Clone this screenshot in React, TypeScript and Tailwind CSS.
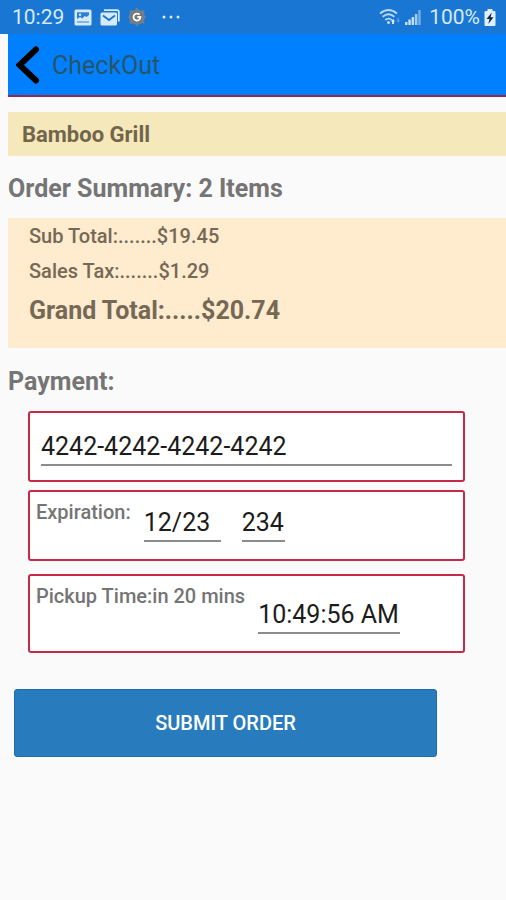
import { useState } from "react";

function PictureIcon() {
  return (
    <svg width="18" height="17" viewBox="0 0 18 17" aria-hidden="true">
      <rect x="0.5" y="0.5" width="17" height="16" rx="1.5" fill="#d5eafc" />
      <rect x="3" y="3.3" width="12" height="10.2" fill="#2a80d4" />
      <path d="M3 12.5V10l3-2 2.500 1.500L10.500 7l2 1L15 6v6.500Z" fill="#d5eafc" />
      <circle cx="6" cy="5.8" r="1.2" fill="#d5eafc" />
    </svg>
  );
}

function MailIcon() {
  return (
    <svg width="20" height="17" viewBox="0 0 20 17" fill="none" aria-hidden="true">
      <path d="M4 1.2H17q1.8 0 1.8 1.8v9.500" stroke="#d5eafc" strokeWidth="1.8" />
      <rect x="0.5" y="3.5" width="16.5" height="13" rx="1.5" fill="#d5eafc" />
      <path d="m3 6.500 6 4.5L15 6.500" stroke="#1976d2" strokeWidth="1.8" />
    </svg>
  );
}

function GearIcon() {
  return (
    <svg width="18" height="20" viewBox="0 0 18 20" fill="none" aria-hidden="true">
      <path
        d="m9 .8 2.8 2.700 4.600-.1-.2 4.100L17.800 10l-1.600 2.500.2 4.100-4.600-.1L9 19.200l-2.800-2.700-4.600.1.2-4.100L.2 10l1.600-2.500-.2-4.100 4.600.1Z"
        fill="#6f8190"
      />
      <circle cx="9" cy="10" r="5.6" fill="#77736f" />
      <path d="M11.6 7.7A3.5 3.5 0 1 0 12.5 10H9.3" stroke="#fff" strokeWidth="1.8" />
    </svg>
  );
}

function WifiIcon() {
  return (
    <svg width="22" height="18" viewBox="0 0 22 18" fill="none" aria-hidden="true">
      <g stroke="#b9d9f5" strokeWidth="1.8">
        <path d="M1 5.5q8.5-7 17 0" />
        <path d="M3.6 8.8q5.9-5 11.8 0" />
        <path d="M6.3 12q3.2-2.8 6.4 0" />
      </g>
      <circle cx="9.5" cy="14.5" r="1.5" fill="#b9d9f5" />
      <path d="m14 11 2.2 2.6H15V16h-2v-2.4h-1.2Z" fill="#d5eafc" />
      <path d="m19.3 15 1.8-3h-1.3V9.600h-1.200V12h-1.100Z" fill="#5c9fde" />
    </svg>
  );
}

function SignalIcon() {
  return (
    <svg width="16" height="17" viewBox="0 0 16 17" aria-hidden="true">
      <path d="M0 13h2.500v3H0ZM3.300 10.500h2.500V16H3.300ZM6.600 8h2.500v8H6.600Z" fill="#c2def6" />
      <path d="M9.900 5h2.500v11H9.900Z" fill="#a5cdf0" />
      <path d="M13.200 1h2.500v15h-2.500Z" fill="#75afe3" />
    </svg>
  );
}

function BatteryIcon() {
  return (
    <svg width="12" height="19" viewBox="0 0 12 19" aria-hidden="true">
      <path d="M3.500 1h5v2H10.500q1 0 1 1v13q0 1-1 1h-9q-1 0-1-1V4q0-1 1-1h2Z" fill="#deeffd" />
      <path d="M7.800 4.500 2.500 11h3L4.300 16l5.200-6.800H6.600Z" fill="#10263c" />
    </svg>
  );
}

function StatusBar() {
  return (
    <div className="flex h-[34px] items-center bg-[#1976d2] pr-[10px] pl-3 text-[21px] leading-6 text-[#d5eafc]">
      <span>10:29</span>
      <div className="ml-[10px] flex items-center gap-2">
        <PictureIcon />
        <MailIcon />
        <GearIcon />
      </div>
      <svg className="ml-4" width="18" height="4" viewBox="0 0 18 4" fill="#d5eafc" aria-hidden="true">
        <circle cx="2" cy="2" r="1.500" />
        <circle cx="9" cy="2" r="1.500" />
        <circle cx="16" cy="2" r="1.500" />
      </svg>
      <div className="ml-auto flex items-center">
        <WifiIcon />
        <span className="ml-1">
          <SignalIcon />
        </span>
        <span className="ml-2">100%</span>
        <span className="ml-1">
          <BatteryIcon />
        </span>
      </div>
    </div>
  );
}

const card = "flex rounded-[3px] border-2 border-[#c62a48] bg-white";
const field =
  "h-10 border-b-2 border-[#8c8c8c] bg-transparent pt-[2px] text-[25px] text-[#1c1c1c] outline-none";
const label = "text-[20px] leading-6 font-medium text-[#757575]";

export default function App() {
  const [cardNumber, setCardNumber] = useState("4242-4242-4242-4242");
  const [expiry, setExpiry] = useState("12/23");
  const [cvc, setCvc] = useState("234");
  const [pickup, setPickup] = useState("10:49:56 AM");

  return (
    <div className="min-h-screen bg-[#fafafa] font-['Roboto',sans-serif]">
      <StatusBar />
      <div className="pl-2">
        <header className="flex h-[63px] items-center border-b-2 border-[#98264f] bg-[#0080ff]">
          <button type="button" aria-label="Back" className="ml-2 h-10 w-6">
            <svg width="24" height="40" viewBox="0 0 24 40" fill="none">
              <path
                d="M20 4.500 3.500 20 20 35.500"
                stroke="#000"
                strokeWidth="6"
                strokeLinecap="round"
              />
            </svg>
          </button>
          <h1 className="ml-3 pt-[2px] text-[25px] leading-8 text-[#285568]">CheckOut</h1>
        </header>

        <main>
          <h2 className="mt-[15px] bg-[#f5e8bb] px-[14px] pt-[9px] pb-[7px] text-[22px] leading-7 font-bold text-[#71664b]">
            Bamboo Grill
          </h2>
          <h2 className="mt-[17px] text-[25px] leading-8 font-bold text-[#757575]">
            Order Summary: 2 Items
          </h2>
          <section className="mt-[13px] bg-[#ffebcd] px-[21px] pt-[6px] pb-[21px] text-[#756956]">
            <p className="text-[20px] leading-6 font-medium">Sub Total:.......$19.45</p>
            <p className="mt-[11px] text-[20px] leading-6 font-medium">Sales Tax:.......$1.29</p>
            <p className="mt-3 text-[25px] leading-8 font-bold">Grand Total:.....$20.74</p>
          </section>
          <h2 className="mt-[18px] text-[25px] leading-8 font-bold text-[#757575]">Payment:</h2>

          <form onSubmit={(e) => e.preventDefault()}>
            <div className="mt-[13px] mr-[41px] ml-[20px]">
              <div className={`${card} h-[71px] px-[11px] pt-[13px]`}>
                <input
                  aria-label="Card number"
                  className={`${field} w-full`}
                  value={cardNumber}
                  onChange={(e) => setCardNumber(e.target.value)}
                />
              </div>
              <div className={`${card} mt-2 h-[71px] px-[6px]`}>
                <label htmlFor="expiry" className={`${label} mt-2`}>
                  Expiration:
                </label>
                <input
                  id="expiry"
                  className={`${field} mt-[10px] ml-[13px] w-[77px]`}
                  value={expiry}
                  onChange={(e) => setExpiry(e.target.value)}
                />
                <input
                  aria-label="Security code"
                  className={`${field} mt-[10px] ml-[21px] w-[43px]`}
                  value={cvc}
                  onChange={(e) => setCvc(e.target.value)}
                />
              </div>
              <div className={`${card} mt-[13px] h-[79px] px-[6px]`}>
                <label htmlFor="pickup" className={`${label} mt-2`}>
                  Pickup Time:in 20 mins
                </label>
                <input
                  id="pickup"
                  className={`${field} mt-[18px] ml-[13px] w-[142px]`}
                  value={pickup}
                  onChange={(e) => setPickup(e.target.value)}
                />
              </div>
            </div>
            <div className="mt-9 mr-[69px] ml-[6px]">
              <button
                type="submit"
                className="h-[68px] w-full rounded-[3px] border border-[#1d6dad] bg-[#287bbd] text-[20px] font-medium text-white"
              >
                SUBMIT ORDER
              </button>
            </div>
          </form>
        </main>
      </div>
    </div>
  );
}
